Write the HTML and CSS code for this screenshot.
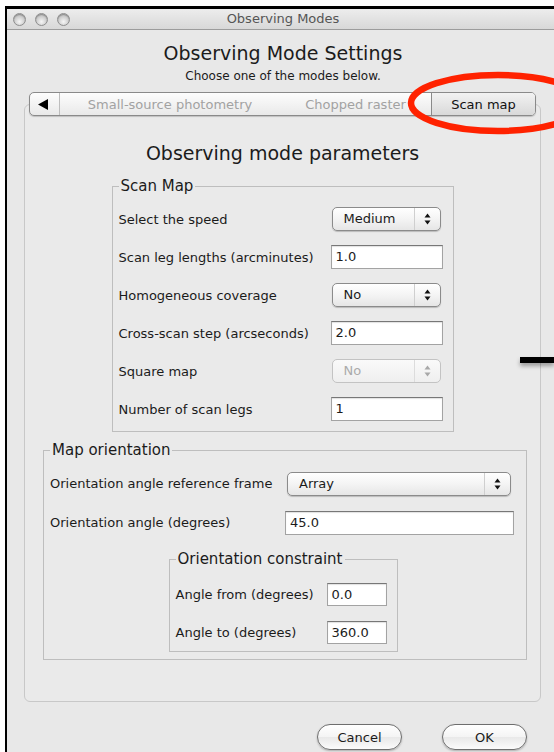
FILE: index.html
```html
<!DOCTYPE html>
<html lang="en">
<head>
<meta charset="utf-8">
<title>Observing Modes</title>
<link rel="stylesheet" href="styles.css">
</head>
<body>
<div class="window">
  <div class="titlebar">
    <div class="lights"><span class="light"></span><span class="light"></span><span class="light"></span></div>
    <div class="title">Observing Modes</div>
    <div></div>
  </div>
  <div class="content">
    <h1 class="heading">Observing Mode Settings</h1>
    <p class="sub">Choose one of the modes below.</p>
    <div class="tabs">
      <div class="tab-arrow"><svg width="10" height="11" viewBox="0 0 10 11"><path d="M0 5.5 L10 0 V11 Z" fill="#000"/></svg></div>
      <div class="tab tab-small">Small-source photometry</div>
      <div class="tab tab-chopped">Chopped raster</div>
      <div class="tab tab-scan selected">Scan map</div>
    </div>
    <div class="panel">
      <h2 class="panel-title">Observing mode parameters</h2>

      <fieldset class="group scan">
        <legend>Scan Map</legend>
        <div class="rows">
          <span class="label">Select the speed</span>
          <div class="popup"><span class="val">Medium</span><span class="arr"><svg width="7" height="12" viewBox="0 0 7 12"><path d="M3.5 0.5 L6.5 4.5 H0.5 Z M3.5 11.5 L6.5 7.5 H0.5 Z"/></svg></span></div>

          <span class="label">Scan leg lengths (arcminutes)</span>
          <div class="field">1.0</div>

          <span class="label">Homogeneous coverage</span>
          <div class="popup"><span class="val">No</span><span class="arr"><svg width="7" height="12" viewBox="0 0 7 12"><path d="M3.5 0.5 L6.5 4.5 H0.5 Z M3.5 11.5 L6.5 7.5 H0.5 Z"/></svg></span></div>

          <span class="label">Cross-scan step (arcseconds)</span>
          <div class="field">2.0</div>

          <span class="label">Square map</span>
          <div class="popup disabled"><span class="val">No</span><span class="arr"><svg width="7" height="12" viewBox="0 0 7 12"><path d="M3.5 0.5 L6.5 4.5 H0.5 Z M3.5 11.5 L6.5 7.5 H0.5 Z"/></svg></span></div>

          <span class="label">Number of scan legs</span>
          <div class="field">1</div>
        </div>
      </fieldset>

      <fieldset class="group orient">
        <legend>Map orientation</legend>
        <div class="rows">
          <span class="label">Orientation angle reference frame</span>
          <div class="popup wide"><span class="val">Array</span><span class="arr"><svg width="7" height="12" viewBox="0 0 7 12"><path d="M3.5 0.5 L6.5 4.5 H0.5 Z M3.5 11.5 L6.5 7.5 H0.5 Z"/></svg></span></div>

          <span class="label">Orientation angle (degrees)</span>
          <div class="field">45.0</div>
        </div>

        <fieldset class="group constraint">
          <legend>Orientation constraint</legend>
          <div class="rows">
            <span class="label">Angle from (degrees)</span>
            <div class="field small">0.0</div>

            <span class="label">Angle to (degrees)</span>
            <div class="field small">360.0</div>
          </div>
        </fieldset>
      </fieldset>
    </div>

    <div class="buttons">
      <div class="btn">Cancel</div>
      <div class="btn">OK</div>
    </div>
  </div>

  <!-- annotation: ring around the active tab and a pointer bar -->
  <svg class="ring" width="149" height="68" viewBox="0 0 149 68">
    <ellipse cx="93" cy="34" rx="87" ry="28" fill="none" stroke="#ff2200" stroke-width="6.5"/>
  </svg>
  <div class="pointer"></div>
</div>
</body>
</html>
```
FILE: styles.css
```css
* { box-sizing: border-box; }

html, body {
  margin: 0;
  width: 554px;
  height: 752px;
  overflow: hidden;
  background: #fff;
}

body {
  font-family: "DejaVu Sans", "Liberation Sans", sans-serif;
  font-size: 13px;
  color: #1b1b1b;
}

/* window frame: runs off the right and bottom edges */
.window {
  position: relative;
  margin: 6px 0 0 5px;
  width: 549px;
  height: 746px;
  border-left: 2px solid #000;
  border-top: 3px solid #000;
  background: #e8e8e8;
  display: flex;
  flex-direction: column;
  overflow: hidden;
}

.titlebar {
  flex: none;
  height: 21px;
  padding-left: 5px;
  display: grid;
  grid-template-columns: 1fr auto 1fr;
  align-items: center;
  background: linear-gradient(#ededed, #d8d8d8);
  border-bottom: 1px solid #9c9c9c;
}

.lights {
  display: flex;
  gap: 9px;
  padding-left: 1px;
}

.light {
  width: 13px;
  height: 13px;
  border-radius: 50%;
  border: 1px solid #8e8e8e;
  background: radial-gradient(circle at 50% 70%, #f6f6f6 0, #d4d4d4 45%, #ababab 100%);
  box-shadow: inset 0 1px 1px rgba(0,0,0,.25);
}

.title {
  font-size: 13px;
  color: #555;
  line-height: 20px;
}

.content {
  flex: 1;
  padding-left: 5px;
  display: flex;
  flex-direction: column;
}

.heading {
  margin: 11px 0 0;
  font-size: 19px;
  font-weight: normal;
  line-height: 24px;
  text-align: center;
}

.sub {
  margin: 3px 0 0;
  font-size: 12px;
  line-height: 16px;
  text-align: center;
}

/* segmented tab strip */
.tabs {
  position: relative;
  z-index: 1;
  margin: 8px 0 -12px 17px;
  width: 507px;
  height: 24px;
  display: flex;
  border: 1px solid #8a8a8a;
  border-radius: 5px;
  background: linear-gradient(#fdfdfd, #f3f3f3 50%, #e9e9e9);
  box-shadow: 0 1px 1px rgba(0,0,0,.18);
  overflow: hidden;
}

.tab-arrow {
  width: 30px;
  flex: none;
  display: flex;
  align-items: center;
  justify-content: center;
  padding-right: 3px;
  border-right: 1px solid #bdbdbd;
}

.tab {
  display: flex;
  align-items: center;
  justify-content: center;
  color: #a2a2a2;
  white-space: nowrap;
}

.tab-small { width: 220px; }
.tab-chopped { width: 151px; }
.tab-scan { flex: 1; }

.tab.selected {
  color: #111;
  border-left: 1px solid #8a8a8a;
  background: linear-gradient(#f2f2f2, #d9d9d9);
}

/* content panel */
.panel {
  margin: 0 13px 0 12px;
  padding: 37px 0 41px;
  border: 1px solid #c8c8c8;
  border-radius: 6px;
  background: #eaeaea;
  display: flex;
  flex-direction: column;
  align-items: center;
}

.panel-title {
  margin: 0;
  font-size: 19px;
  font-weight: normal;
  line-height: 22px;
}

.group {
  margin: 0;
  border: 1px solid #bebebe;
  min-width: 0;
}

.group legend {
  font-size: 15px;
  line-height: 16px;
  padding: 0 2px;
}

.rows {
  display: grid;
  align-items: center;
}

.label {
  white-space: nowrap;
}

.scan {
  width: 342px;
  margin-top: 14px;
  padding: 6px 10px 3px 6px;
}

.scan .rows {
  grid-template-columns: 1fr 112px;
  grid-auto-rows: 38px;
}

.orient {
  width: 484px;
  margin: 10px 0 0 5px;
  padding: 6px 12px 7px 6px;
}

.orient > .rows {
  grid-template-columns: 1fr 229px;
  grid-auto-rows: 39px;
}

.constraint {
  width: 229px;
  margin: 9px auto 0;
  padding: 8px 10px 0 6px;
  position: relative;
  left: 1px;
}

.constraint .rows {
  grid-template-columns: 1fr 60px;
  grid-auto-rows: 38px;
}

/* pop-up menu */
.popup {
  height: 24px;
  margin: 0 2px 0 1px;
  display: flex;
  border: 1px solid #8b8b8b;
  border-radius: 5px;
  background: linear-gradient(#ffffff, #f4f4f4 50%, #e6e6e6);
  box-shadow: 0 1px 1px rgba(0,0,0,.2);
}

.popup.wide { margin: 0 3px 0 2px; }

.popup .val {
  flex: 1;
  padding-left: 11px;
  line-height: 22px;
}

.popup .arr {
  width: 26px;
  flex: none;
  display: flex;
  align-items: center;
  justify-content: center;
  border-left: 1px solid #cfcfcf;
}

.popup .arr path { fill: #111; }

.popup.disabled {
  border-color: #c3c3c3;
  background: linear-gradient(#fafafa, #efefef);
  box-shadow: none;
  color: #ababab;
}

.popup.disabled .arr { border-left-color: #dcdcdc; }
.popup.disabled .arr path { fill: #a8a8a8; }

/* text field */
.field {
  height: 24px;
  padding-left: 4px;
  line-height: 22px;
  background: #fff;
  border: 1px solid #a3a3a3;
  border-top-color: #777;
  box-shadow: inset 0 1px 1px rgba(0,0,0,.12);
}

.field.small { height: 23px; line-height: 21px; }

/* dialog buttons */
.buttons {
  display: flex;
  justify-content: flex-end;
  gap: 40px;
  padding-right: 27px;
  margin-top: 22px;
}

.btn {
  width: 85px;
  height: 26px;
  border-radius: 13px;
  border: 1px solid #6e6e6e;
  background: linear-gradient(#ffffff, #f4f4f4 50%, #e9e9e9 52%, #fbfbfb);
  box-shadow: 0 1px 2px rgba(0,0,0,.25);
  display: flex;
  align-items: center;
  justify-content: center;
}

/* annotation marks drawn over the window */
.ring {
  position: absolute;
  z-index: 2;
  left: 398px;
  top: 60px;
  pointer-events: none;
}

.pointer {
  position: absolute;
  z-index: 2;
  left: 513px;
  top: 348px;
  width: 34px;
  height: 6px;
  background: #000;
  box-shadow: 0 3px 4px rgba(0,0,0,.35);
}
```
